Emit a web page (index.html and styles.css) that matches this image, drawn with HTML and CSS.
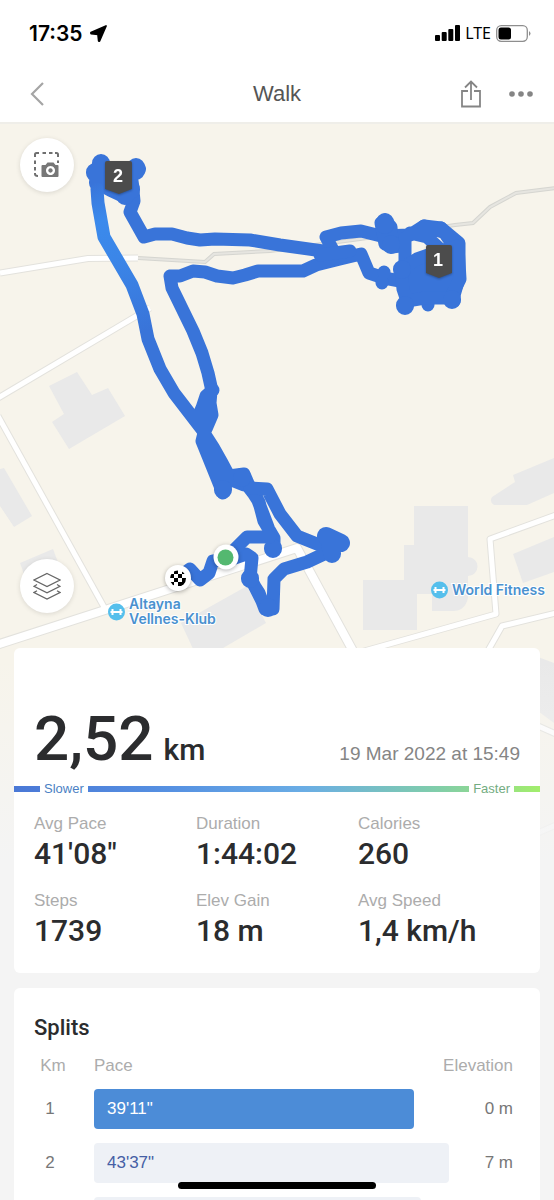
FILE: index.html
```html
<!DOCTYPE html>
<html lang="en">
<head>
    <meta charset="UTF-8">
    <meta name="viewport" content="width=device-width, initial-scale=1.0">
    <title>Walk</title>
    <link rel="stylesheet" href="styles.css">
</head>
<body>
    <div class="app">
        <div class="status-bar">
            <div class="status-left">
                <span class="time">17:35</span>
                <svg width="17" height="17" viewBox="0 0 17 17"><path d="M16 1 1 7.500 1 8.500 8 9.300 8.700 16H9.500z" fill="#000" stroke="#000" stroke-width="1.800" stroke-linejoin="round"/></svg>
            </div>
            <div class="status-right">
                <svg width="25" height="17" viewBox="0 0 25 17">
                    <rect x="0" y="10" width="5" height="6" rx="1"/>
                    <rect x="6.700" y="7" width="5" height="9" rx="1"/>
                    <rect x="13.300" y="4" width="5" height="12" rx="1"/>
                    <rect x="20" y="0" width="5" height="16" rx="1"/>
                </svg>
                <span class="network">LTE</span>
                <svg width="35" height="17" viewBox="0 0 35 17">
                    <rect x=".7" y=".7" width="30.6" height="15.6" rx="4.5" fill="none" stroke="#8e8e8e" stroke-width="1.3"/>
                    <rect x="2.5" y="2.5" width="12.5" height="12" rx="2.5"/>
                    <path d="M33 6q3 2.500 0 5z" fill="#8e8e8e"/>
                </svg>
            </div>
        </div>

        <header class="nav">
            <button class="icon-btn" aria-label="Back">
                <svg width="14" height="24" viewBox="0 0 14 24"><path d="M13 1 2 12l11 11" fill="none" stroke="#a5a5a5" stroke-width="2.200"/></svg>
            </button>
            <h1>Walk</h1>
            <div class="nav-actions">
                <button class="icon-btn" aria-label="Share">
                    <svg width="20" height="28" viewBox="0 0 20 28"><path d="M7 11H1v15.500h18V11h-6M10 20V2M4 7.500l6-6 6 6" fill="none" stroke="#858585" stroke-width="1.800"/></svg>
                </button>
                <button class="icon-btn" aria-label="More">
                    <svg width="26" height="8" viewBox="0 0 26 8" fill="#858585"><circle cx="4" cy="4" r="2.800"/><circle cx="13" cy="4" r="2.800"/><circle cx="22" cy="4" r="2.800"/></svg>
                </button>
            </div>
        </header>

        <main class="content">
            <section class="map">
                <svg class="map-canvas" viewBox="0 123 554 737" preserveAspectRatio="xMidYMin slice">
                    <defs>
                        <linearGradient id="fade" x1="0" y1="0" x2="0" y2="1">
                            <stop offset="0" stop-color="#f4f4f4" stop-opacity="0"/>
                            <stop offset="1" stop-color="#f4f4f4"/>
                        </linearGradient>
                        <linearGradient id="pace" gradientUnits="userSpaceOnUse" x1="98" y1="180" x2="145" y2="330">
                            <stop offset="0" stop-color="#3974d9"/>
                            <stop offset=".25" stop-color="#3b8aec"/>
                            <stop offset=".5" stop-color="#3b86e8"/>
                            <stop offset="1" stop-color="#3974d9"/>
                        </linearGradient>
                        <clipPath id="flag"><circle cx="178" cy="577.500" r="8"/></clipPath>
                    </defs>
                    <rect y="123" width="554" height="737" fill="#f7f4eb"/>

                    <!-- buildings -->
                    <g fill="#e9e9e9">
                        <path d="M49 385 77 371 92 394 108 387 125 415 69 448 52 421 64 413z"/>
                        <path d="M0 468 4 467 32 515 14 526 0 505z"/>
                        <path d="M20 562 53 548 62 572 30 590z"/>
                        <path d="M181 622 247 585 266 622 218 650H194z"/>
                        <path d="M414 505h54v51a9 9 0 0 1 0 19v22q-3 13-15 13h-21v-17h-15v36h-54v-50h41v-35h10z"/>
                        <path d="M513 474 554 457v35l-27 12h-33q-5-3-2-8l23-15z"/>
                        <path d="M513 553 554 536v35l-31 11z"/>
                        <path d="M538 656 554 662v60l-16-12z"/>
                    </g>

                    <!-- roads -->
                    <g class="road-edge">
                        <path d="M0 272 88 257.500 138 257"/>
                        <path d="M-2 397 150 307"/>
                        <path d="M-2 415 104 606"/>
                        <path class="wide" d="M-2 643.500 105 609 297 547 353 650"/>
                        <path d="M350 654 496 613 490 538 556 514M485 655 502 625 556 612M538 725 556 733M538 832 556 824"/>
                    </g>
                    <g class="road">
                        <path d="M0 272 88 257.500 138 257"/>
                        <path d="M-2 397 150 307"/>
                        <path d="M-2 415 104 606"/>
                        <path class="wide" d="M-2 643.500 105 609 297 547 353 650"/>
                        <path d="M350 654 496 613 490 538 556 514M485 655 502 625 556 612M538 725 556 733M538 832 556 824"/>
                    </g>
                    <path d="M138 257 205 261 214 253 270 250 360 238 455 224 473 222 490 206 516 192 556 187" fill="none" stroke="#d5d5d0" stroke-width="4"/>
                    <path d="M138 257 205 261 214 253 270 250 360 238 455 224 473 222 490 206 516 192 556 187" fill="none" stroke="#e6e5e0" stroke-width="2"/>

                    <!-- track -->
                    <g class="track">
                        <path d="M133 190 134 200 130 211 144 236 155 233 172 233 187 237 200 239 215 238 250 239 280 244 330 251"/>
                        <path d="M324 250 333 249 326 236 341 232 361 230 381 235 410 234 424 225 441 227 459 242 459 277 453 298"/>
                        <path class="solid" d="M381 222 385 219 391 226 392 240 400 245 392 246 385 243z"/>
                        <path d="M405 237 405 262M424 225 446 232M410 232 427 236 440 248M441 227 453 244"/>
                        <path d="M212 390 208 372 202 352 193 330 172 287 170 275 180 275 193 270 205 271 217 275 233 277 245 274 258 270 303 270 316 264 340 258 361 253 369 272 384 277 400 280"/>
                        <path d="M320 254 350 250M382 281v1M384 271v1M407 305v-5M428 304v-5M458 263v14"/>
                        <path class="solid" d="M401 268 417 258 440 250 458 245 460 278 452 294 454 300 446 297 425 297 407 300 403 288z"/>
                        <path class="solid" d="M102 162 96 171 97 182 110 189 125 196 133 187 132 180 115 178z"/>
                        <path class="knob" d="M101 162v1M95 171v1M98 181v1M136 166v4M137 168 118 172M131 188v1M125 194v1M385 221v3M391 243v1M405 304v1M452 298v1M402 268v1"/>
                        <path d="M213 389 206 395 202 407 197 418M211 390 210 402 212 414 206 428"/>
                        <path d="M204 432 202 440 223 492 227 480M204 432 213 446 222 462 229 475 244 473 250 487 259 501 264 520 274 537 274 549M229 478 244 484M272 538 268 526 257 497 244 480"/>
                        <path d="M250 487 267 488 280 513 297 535 317 543 341 542 326 535 333 550 324 553 307 561 284 568 274 578 273 608 265 608 259 592 250 578 252 557 246 553 226 560M264 604 252 580"/>
                        <path class="knob" d="M326 535 341 542M330 545v1M332 552v1M250 577v1M268 606v1M223 488v1M273 547v1M242 476v1"/>
                        <path d="M226 557 247 536 270 536M222 559 213 560 209 572 200 579 190 568 178 577"/>
                        <path d="M97 188 98 202 104 236 132 284 143 313 148 338 160 368 174 392 204 431" stroke="url(#pace)"/>
                    </g>

                    <!-- kilometre flags -->
                    <g class="km-flag">
                        <path d="M107 160h23q2 0 2 2v26l-13 5-14-5v-26q0-2 2-2z"/>
                        <text x="118" y="181">2</text>
                        <path d="M428 244h22q2 0 2 2v26l-13 5-13-5v-26q0-2 2-2z"/>
                        <text x="438" y="265">1</text>
                    </g>

                    <!-- start and finish -->
                    <g class="pin"><circle cx="226" cy="556" r="12.500"/><circle cx="178" cy="577" r="13"/></g>
                    <circle cx="225.500" cy="556.500" r="8" fill="#54b870"/>
                    <g clip-path="url(#flag)">
                        <path d="M174 569h4v4h-4zM182 569h4v4h-4zM170 573h4v4h-4zM178 573h4v4h-4zM174 577h4v4h-4zM182 577h4v4h-4zM170 581h4v4h-4zM178 581h4v4h-4zM182 585h4v-4h-4z"/>
                    </g>

                    <!-- places -->
                    <g class="place">
                        <circle cx="116.500" cy="611" r="8.500"/>
                        <path d="M110.500 611h12M112.500 608v6M120.500 608v6"/>
                        <text x="129" y="608">Altayna</text>
                        <text x="129" y="623">Vellnes-Klub</text>
                        <circle cx="439.500" cy="589" r="8.500"/>
                        <path d="M433.500 589h12M435.500 586v6M443.500 586v6"/>
                        <text x="452" y="594">World Fitness</text>
                    </g>
                    <rect y="660" width="554" height="200" fill="url(#fade)"/>
                </svg>
                <button class="map-btn map-btn-photo" aria-label="Map snapshot">
                    <svg width="26" height="26" viewBox="0 0 26 26">
                        <path d="M1 5V2.500Q1 1 2.500 1H5M8.500 1H12M15 1h3.500M21 1h1.500Q24 1 24 2.500V5M1 8.500V12M1 15v3.500M1 21v1q0 2 3 2M24 8.500V11" fill="none" stroke="#6f6f6f" stroke-width="2"/>
                        <path fill="#777" fill-rule="evenodd" d="M8.500 13h3l2-2.500h6l2 2.500h2q1 0 1 1v10q0 1-1 1h-15q-1 0-1-1V14q0-1 1-1zM16.500 14a4.500 4.500 0 1 0 .01 0zM16.500 16.300a2.200 2.200 0 1 1-.01 0z"/>
                    </svg>
                </button>
                <button class="map-btn map-btn-layers" aria-label="Map layers">
                    <svg width="28" height="28" viewBox="0 0 28 28" fill="none" stroke="#666" stroke-width="1.300">
                        <path d="M14 1.500 27 8 14 14.500 1 8z"/>
                        <path d="M4 12.500 1 14.300 14 20.800 27 14.300 24 12.500M4 18.800 1 20.500 14 27 27 20.500 24 18.800"/>
                    </svg>
                </button>
            </section>

            <section class="cards">
                <div class="card summary">
                    <div class="distance-row">
                        <p class="distance">2,52 <span>km</span></p>
                        <time datetime="2022-03-19T15:49">19 Mar 2022 at 15:49</time>
                    </div>
                    <div class="pace-scale">
                        <span class="slower">Slower</span>
                        <span class="faster">Faster</span>
                    </div>
                    <dl class="stats">
                        <div><dt>Avg Pace</dt><dd>41'08"</dd></div>
                        <div><dt>Duration</dt><dd>1:44:02</dd></div>
                        <div><dt>Calories</dt><dd>260</dd></div>
                        <div><dt>Steps</dt><dd>1739</dd></div>
                        <div><dt>Elev Gain</dt><dd>18 m</dd></div>
                        <div><dt>Avg Speed</dt><dd>1,4 km/h</dd></div>
                    </dl>
                </div>

                <div class="card splits">
                    <h2>Splits</h2>
                    <table>
                        <colgroup>
                            <col class="col-km">
                            <col>
                            <col class="col-gap">
                            <col class="col-elev">
                        </colgroup>
                        <thead>
                            <tr><th class="km">Km</th><th>Pace</th><th class="elev" colspan="2">Elevation</th></tr>
                        </thead>
                        <tbody>
                            <tr>
                                <td class="km">1</td>
                                <td colspan="2"><div class="bar best" style="width: 90%">39'11"</div></td>
                                <td class="elev">0 m</td>
                            </tr>
                            <tr>
                                <td class="km">2</td>
                                <td colspan="2"><div class="bar" style="width: 100%">43'37"</div></td>
                                <td class="elev">7 m</td>
                            </tr>
                            <tr>
                                <td class="km"></td>
                                <td colspan="2"><div class="bar" style="width: 92%"></div></td>
                                <td class="elev"></td>
                            </tr>
                        </tbody>
                    </table>
                </div>
            </section>
        </main>
        <div class="home-indicator"></div>
    </div>
</body>
</html>
```
FILE: styles.css
```css
* {
    box-sizing: border-box;
    margin: 0;
    padding: 0;
}
body {
    font-family: "Liberation Sans", Arial, sans-serif;
    background: #f4f4f4;
    color: #2b2c2e;
}
.app {
    position: relative;
    display: flex;
    flex-direction: column;
    height: 100vh;
    overflow: hidden;
}
svg {
    display: block;
}
button {
    border: none;
    background: none;
    cursor: pointer;
}

/* status bar */
.status-bar {
    display: flex;
    justify-content: space-between;
    align-items: center;
    height: 66px;
    padding: 0 23px 0 29px;
    background: #fff;
    color: #000;
    flex-shrink: 0;
}
.status-left {
    display: flex;
    align-items: center;
    gap: 7px;
}
.status-right {
    display: flex;
    align-items: center;
    gap: 5px;
}
.time {
    font-family: Inter, sans-serif;
    font-size: 21px;
    font-weight: 600;
}
.network {
    font-family: "Noto Sans", sans-serif;
    font-size: 16px;
    line-height: 20px;
}

/* navigation */
.nav {
    display: grid;
    grid-template-columns: 1fr auto 1fr;
    align-items: center;
    height: 58px;
    padding: 0 20px 0 30px;
    background: #fff;
    border-bottom: 2px solid #efeee9;
    flex-shrink: 0;
}
.nav h1 {
    font-size: 22px;
    font-weight: normal;
    color: #555;
    margin-right: 10px;
}
.nav-actions {
    display: flex;
    align-items: center;
    justify-content: flex-end;
    gap: 27px;
}
.icon-btn {
    justify-self: start;
}

/* map */
.content {
    flex: 1;
    min-height: 0;
    overflow: hidden;
}
.map {
    position: relative;
}
.map-canvas {
    width: 100%;
    height: 737px;
}
.road-edge, .road, .track {
    fill: none;
    stroke-linejoin: round;
}
.road-edge {
    stroke: #e3e2dd;
    stroke-width: 7px;
}
.road-edge .wide {
    stroke-width: 10px;
}
.road {
    stroke: #fff;
    stroke-width: 5px;
}
.road .wide {
    stroke-width: 8px;
}
.track {
    stroke: #3974d9;
    stroke-width: 13px;
    stroke-linecap: round;
}
.track .solid {
    fill: #3974d9;
}
.track .knob {
    stroke-width: 18px;
}
.km-flag {
    fill: #4c4c4c;
    filter: drop-shadow(0 1px 1px rgba(0,0,0,0.3));
}
.km-flag text {
    fill: #fff;
    font-family: "Liberation Sans", Arial, sans-serif;
    font-size: 18px;
    font-weight: bold;
    text-anchor: middle;
}
.pin {
    fill: #fff;
    filter: drop-shadow(0 1px 2px rgba(0,0,0,0.3));
}
.place circle {
    fill: #55bfec;
}
.place path {
    fill: none;
    stroke: #fff;
    stroke-width: 2px;
}
.place text {
    fill: #4a91cf;
    font-family: Inter, sans-serif;
    font-size: 14px;
    font-weight: 600;
    stroke: #fff;
    stroke-width: 2px;
    paint-order: stroke;
}
.map-btn {
    position: absolute;
    left: 20px;
    display: flex;
    align-items: center;
    justify-content: center;
    width: 54px;
    height: 54px;
    border-radius: 50%;
    background: #fff;
    box-shadow: 0 1px 5px rgba(0,0,0,0.12);
}
.map-btn-photo {
    top: 14px;
}
.map-btn-layers {
    top: 435px;
}

/* cards */
.cards {
    position: relative;
    display: flex;
    flex-direction: column;
    gap: 15px;
    margin-top: -213px;
    padding: 0 14px;
}
.card {
    background: #fff;
    border-radius: 6px;
}
.summary {
    padding: 51px 0 23px;
}
.distance-row {
    display: flex;
    justify-content: space-between;
    align-items: baseline;
    padding: 0 20px;
}
.distance {
    display: flex;
    align-items: baseline;
    gap: 10px;
    font-family: Roboto, sans-serif;
    font-size: 62px;
    font-weight: 500;
    line-height: 80px;
    white-space: nowrap;
}
.distance span {
    font-size: 30px;
    line-height: 30px;
}
.distance-row time {
    font-size: 19px;
    color: #858585;
}
.pace-scale {
    display: flex;
    justify-content: space-between;
    padding: 0 26px;
    background: linear-gradient(90deg, #4a78d6, #5691e2 30%, #6aade5 55%, #80cdab 80%, #8ed793 88%, #a2ee6c) center / 100% 6px no-repeat;
}
.pace-scale span {
    padding: 0 4px;
    background: #fff;
    font-size: 13px;
    line-height: 20px;
}
.slower {
    color: #4a7fc4;
}
.faster {
    color: #73ac81;
}
.stats {
    display: grid;
    grid-template-columns: repeat(3, 1fr);
    row-gap: 17px;
    padding: 14px 20px 0;
}
.stats dt {
    font-size: 17px;
    line-height: 22px;
    color: #acacac;
}
.stats dd {
    font-family: Roboto, sans-serif;
    font-size: 30px;
    font-weight: 500;
    line-height: 38px;
    white-space: nowrap;
}

/* splits */
.splits {
    padding: 26px 20px;
}
.splits h2 {
    font-family: Roboto, sans-serif;
    font-size: 22px;
    font-weight: 500;
    line-height: 28px;
    margin-bottom: 8px;
}
table {
    width: 100%;
    table-layout: fixed;
    border-collapse: collapse;
    font-size: 17px;
}
.col-km {
    width: 60px;
}
.col-gap {
    width: 20px;
}
.col-elev {
    width: 71px;
}
th {
    height: 32px;
    font-weight: normal;
    text-align: left;
    color: #acacac;
}
td {
    height: 54px;
    color: #777;
}
.km {
    padding-right: 28px;
    text-align: center;
}
th.km {
    padding-left: 6px;
}
.elev {
    padding-right: 7px;
    text-align: right;
}
.bar {
    height: 40px;
    padding-left: 13px;
    border-radius: 4px;
    background: #eef1f6;
    color: #455fa5;
    line-height: 40px;
}
.bar.best {
    background: #4c8cd7;
    color: #fff;
}

.home-indicator {
    position: absolute;
    bottom: 11px;
    left: 50%;
    width: 198px;
    height: 7px;
    margin-left: -99px;
    border-radius: 4px;
    background: #000;
}
```
